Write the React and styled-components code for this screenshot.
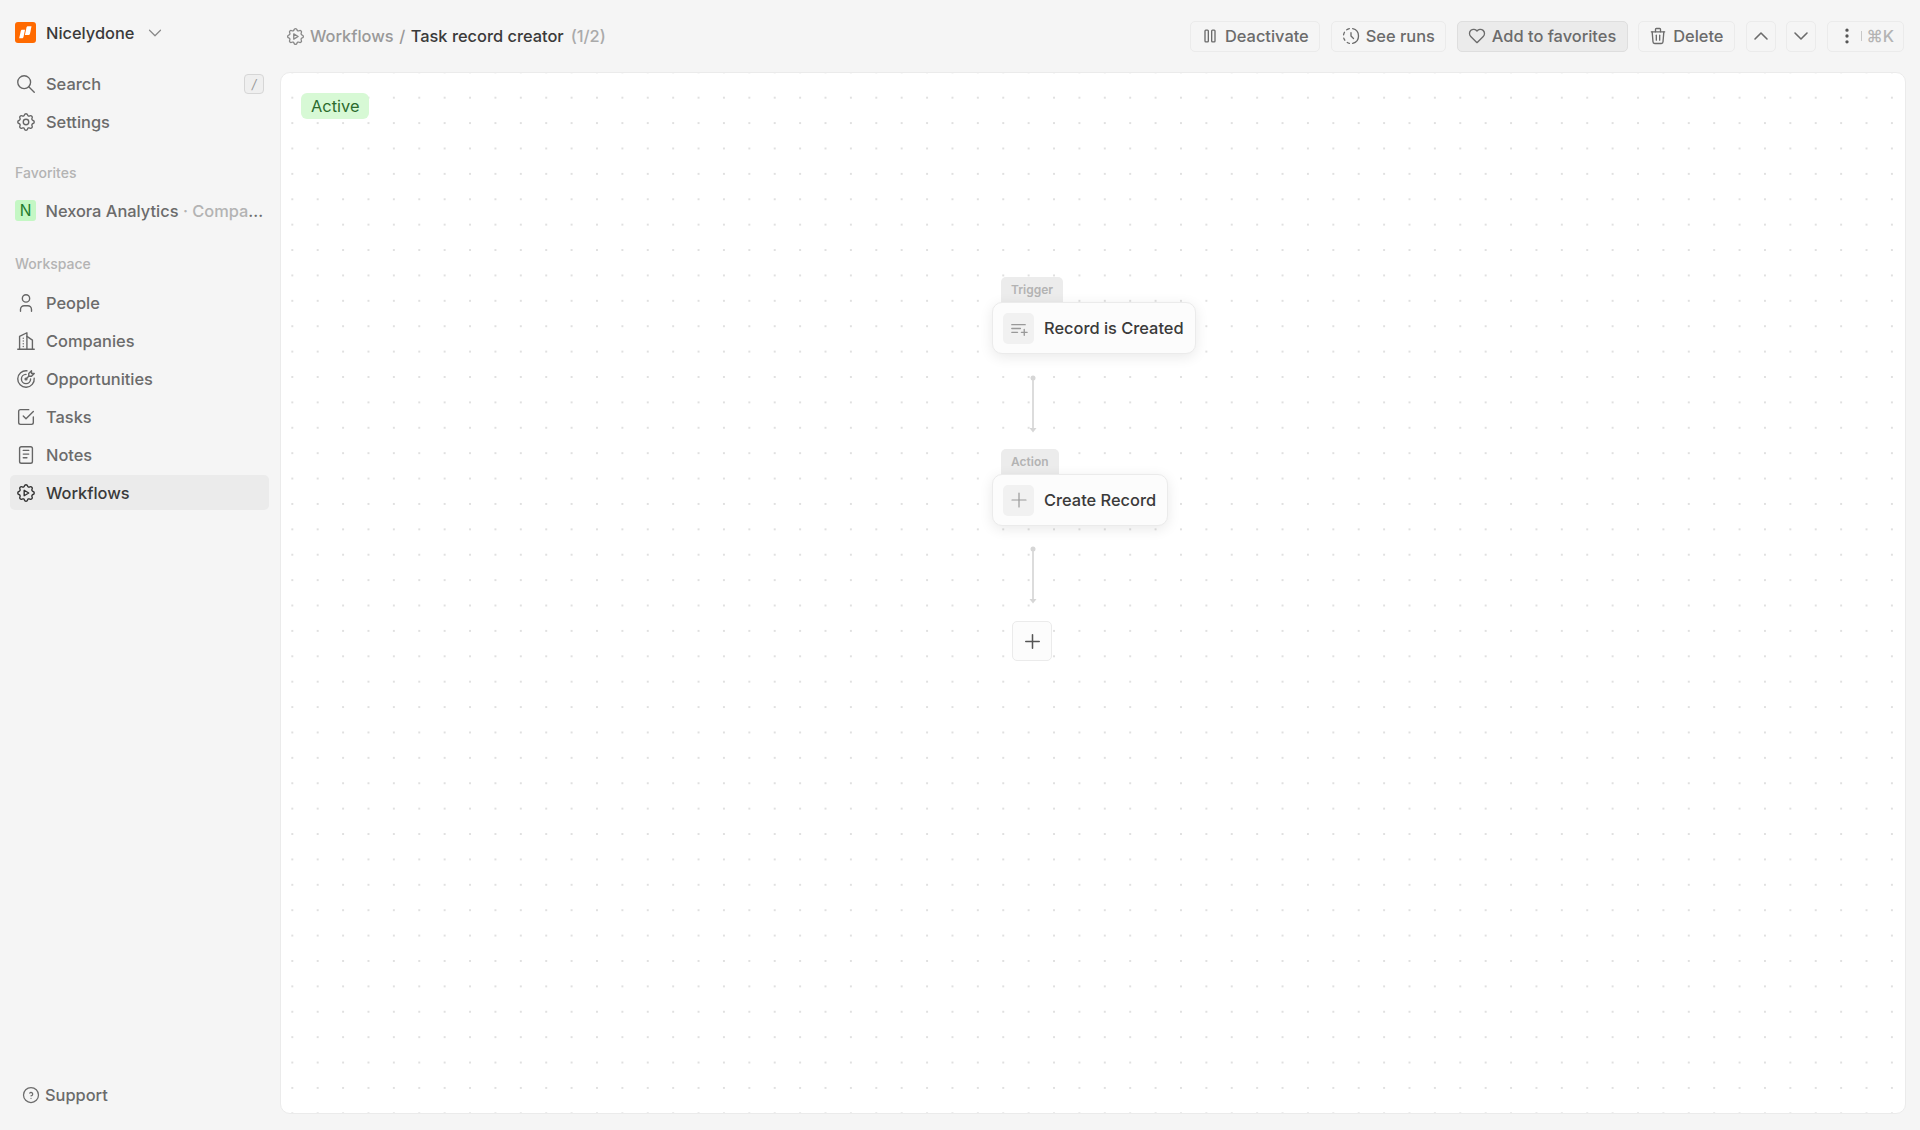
import React from "react";
import styled, { createGlobalStyle } from "styled-components";
import {
  TbSearch, TbSettings, TbUser, TbBuildingSkyscraper, TbTargetArrow, TbCheckbox, TbNotes,
  TbSettingsAutomation, TbPlayerPause, TbHistoryToggle, TbHeart, TbTrash, TbChevronUp,
  TbChevronDown, TbDotsVertical, TbHelpCircle, TbPlaylistAdd, TbPlus,
} from "react-icons/tb";

const Global = createGlobalStyle`
  html, body { margin: 0; padding: 0; height: 100%; }
  body { background: #f5f5f5; font-family: Inter, "Liberation Sans", sans-serif; color: #333; overflow: hidden; }
  * { box-sizing: border-box; }
`;

const Shell = styled.div`display: flex; width: 1920px; height: 1130px;`;

const Sidebar = styled.aside`
  width: 280px; flex: none; display: flex; flex-direction: column; padding: 15px 11px 18px 10px;
`;
const Brand = styled.div`
  display: flex; align-items: center; height: 35px; padding-left: 5px; gap: 10px;
  font-size: 16.4px; font-weight: 500; color: #3a3a3a;
`;
const Logo = styled.svg`width: 21px; height: 21px; flex: none;`;
const BrandChevron = styled(TbChevronDown)`color: #888; margin-left: -1px;`;
const NavGroup = styled.nav`display: flex; flex-direction: column; gap: 3px; margin-top: ${p => p.$mt}px;`;
const Row = styled.div`
  display: flex; align-items: center; height: 35px; padding: 0 5px 0 4.5px; gap: 9.5px; border-radius: 5px;
  font-size: 16.4px; font-weight: 500; white-space: nowrap;
  color: ${p => (p.$active ? "#3a3a3a" : "#6b6b6b")};
  background: ${p => (p.$active ? "#ebebeb" : "transparent")};
  svg { flex: none; color: ${p => (p.$active ? "#333" : "#666")}; }
`;
const Label = styled.div`
  font-size: 14px; font-weight: 500; color: #b3b3b3; padding-left: 5px; height: 16px; line-height: 16px;
  margin-top: ${p => p.$mt}px; margin-bottom: ${p => p.$mb}px;
`;
const Spacer = styled.div`flex: 1;`;
const Key = styled.span`
  margin-left: auto; width: 20px; height: 20px; border: 1px solid #d6d6d6; border-radius: 4px; background: #efefef;
  display: flex; align-items: center; justify-content: center; font-size: 13px; font-style: italic; color: #999; font-weight: 400;
`;
const Avatar = styled.span`
  width: 21px; height: 21px; margin-left: 0.5px; border-radius: 3px; background: #c4f7c4; color: #1f7a2e; flex: none;
  display: flex; align-items: center; justify-content: center; font-size: 15.5px; font-weight: 400;
`;
const Clip = styled.span`overflow: hidden; text-overflow: ellipsis; min-width: 0; flex: 1;`;
const Faint = styled.span`color: #b3b3b3;`;
const SupportRow = styled.div`
  display: flex; align-items: center; height: 35px; padding-left: 10.5px; gap: 4.5px; font-size: 16.4px; font-weight: 500; color: #6b6b6b;
`;

const Main = styled.main`flex: 1; min-width: 0; display: flex; flex-direction: column; padding: 0 14px 16px 0;`;
const Header = styled.header`display: flex; align-items: center; height: 72px; flex: none; padding: 0 2px 0 4.5px;`;
const Crumbs = styled.div`display: flex; align-items: center; font-size: 16.4px; font-weight: 500; white-space: nowrap; flex: 1;`;
const CrumbIcon = styled(TbSettingsAutomation)`color: #888; margin-right: 4.5px;`;
const CrumbParent = styled.span`color: #999;`;
const Slash = styled.span`color: #999; margin: 0 5.5px;`;
const CrumbTitle = styled.span`color: #3a3a3a;`;
const Count = styled.span`color: #aaa; margin-left: 7px;`;
const Actions = styled.div`display: flex; align-items: center; gap: 10.5px;`;
const Btn = styled.button`
  display: flex; align-items: center; justify-content: center; height: 31px; gap: 5px; padding: ${p => (p.$square ? "0" : "0 10.5px 0 9px")};
  width: ${p => (p.$square ? "30px" : "auto")};
  border: 1px solid ${p => (p.$on ? "#dedede" : "#ebebeb")}; border-radius: 5px;
  background: ${p => (p.$on ? "#ebebeb" : "transparent")};
  font: 500 16.4px Inter, "Liberation Sans", sans-serif; color: #6b6b6b;
`;
const MoreBtn = styled(Btn)`padding: 0 9px; gap: 0; color: #b3b3b3;`;
const Bar = styled.span`width: 1px; height: 10px; background: #c8c8c8; flex: none; margin: 0 5px 0 4px;`;

const Canvas = styled.section`
  position: relative; flex: 1; border: 1px solid #ebebeb; border-radius: 10px; overflow: hidden;
  background-color: #fff;
  background-image: radial-gradient(circle, #e0e0e0 1px, transparent 1.3px);
  background-size: 25.4px 25.4px;
  background-position: -1.4px -13.4px;
`;
const Status = styled.span`
  position: absolute; left: 20px; top: 20px; height: 25.5px; padding: 0 10px; border-radius: 6px; background: #d7f9d5; color: #2c6b2e;
  display: flex; align-items: center; font-size: 16.4px; font-weight: 400;
`;
const Node = styled.div`position: absolute; left: ${p => p.$x}px; top: ${p => p.$y}px;`;
const Tab = styled.div`
  position: absolute; left: 9px; top: -25px; height: 27px; padding: 5px 10px 0; border-radius: 5px 5px 0 0; background: #ececec;
  display: flex; align-items: flex-start; font-size: 12px; font-weight: 600; color: #b3b3b3;
`;
const Card = styled.div`
  position: relative; display: flex; align-items: center; height: 52px; gap: 10px; padding: 0 11px 0 10px; border-radius: 10px;
  background: #fcfcfc; border: 1px solid #ebebeb; box-shadow: 0 3px 14px rgba(0, 0, 0, 0.09);
  font-size: 16.4px; font-weight: 500; color: #3a3a3a; white-space: nowrap;
`;
const CardIcon = styled.span`
  width: 31px; height: 31px; border-radius: 5px; background: #f1f1f1; color: #999; display: flex; align-items: center; justify-content: center;
`;
const Edge = styled.svg`position: absolute; left: ${p => p.$x}px; top: ${p => p.$y}px;`;
const AddNode = styled.button`
  position: absolute; left: 731px; top: 548px; width: 40px; height: 40px; border: 1px solid #ebebeb; border-radius: 5px; background: #fcfcfc; color: #555;
  display: flex; align-items: center; justify-content: center; padding: 0;
`;

const Arrow = ({ x, y }) => (
  <Edge $x={x} $y={y} width="12" height="60" viewBox="0 0 12 60">
    <circle cx="6" cy="3" r="2.5" fill="#d6d6d6" />
    <line x1="6" y1="3" x2="6" y2="54" stroke="#d6d6d6" strokeWidth="1.7" />
    <path d="M2.5 53h7L6 57.5z" fill="#d6d6d6" />
  </Edge>
);

const icon = { size: 22, strokeWidth: 1.5 };
const bar = { size: 20, strokeWidth: 1.6 };
const nav = [
  [TbUser, "People"],
  [TbBuildingSkyscraper, "Companies"],
  [TbTargetArrow, "Opportunities"],
  [TbCheckbox, "Tasks"],
  [TbNotes, "Notes"],
];

export default function App() {
  return (
    <Shell>
      <Global />
      <Sidebar>
        <Brand>
          <Logo viewBox="0 0 21 21">
            <rect width="21" height="21" rx="3" fill="#ff6a00" />
            <path d="M5.8 9c.2-.8.8-1.3 1.6-1.3h2.6L8.500 15c-.2.8-.8 1.3-1.600 1.300H4.200z" fill="#fff" />
            <path d="M11.500 5.600c.2-.8.8-1.300 1.600-1.300h3.400L15 11.700c-.2.8-.9 1.300-1.700 1.300H9.900z" fill="#fff" />
          </Logo>
          Nicelydone
          <BrandChevron size={22} strokeWidth={1.3} />
        </Brand>
        <NavGroup $mt={16}>
          <Row><TbSearch {...icon} />Search<Key>/</Key></Row>
          <Row><TbSettings {...icon} />Settings</Row>
        </NavGroup>
        <Label $mt={26} $mb={12}>Favorites</Label>
        <Row><Avatar>N</Avatar><Clip>Nexora Analytics <Faint>· Company</Faint></Clip></Row>
        <Label $mt={28} $mb={13}>Workspace</Label>
        <NavGroup $mt={0}>
          {nav.map(([I, t]) => <Row key={t}><I {...icon} />{t}</Row>)}
          <Row $active><TbSettingsAutomation {...icon} />Workflows</Row>
        </NavGroup>
        <Spacer />
        <SupportRow><TbHelpCircle size={20} strokeWidth={1.5} />Support</SupportRow>
      </Sidebar>
      <Main>
        <Header>
          <Crumbs>
            <CrumbIcon size={21} strokeWidth={1.5} />
            <CrumbParent>Workflows</CrumbParent><Slash>/</Slash>
            <CrumbTitle>Task record creator</CrumbTitle><Count>(1/2)</Count>
          </Crumbs>
          <Actions>
            <Btn><TbPlayerPause {...bar} />Deactivate</Btn>
            <Btn><TbHistoryToggle {...bar} />See runs</Btn>
            <Btn $on><TbHeart {...bar} />Add to favorites</Btn>
            <Btn><TbTrash {...bar} />Delete</Btn>
            <Btn $square><TbChevronUp size={24} strokeWidth={1.6} /></Btn>
            <Btn $square><TbChevronDown size={24} strokeWidth={1.6} /></Btn>
            <MoreBtn><TbDotsVertical size={20} strokeWidth={2} color="#555" /><Bar />⌘K</MoreBtn>
          </Actions>
        </Header>
        <Canvas>
          <Status>Active</Status>
          <Node $x={711} $y={229}>
            <Tab>Trigger</Tab>
            <Card><CardIcon><TbPlaylistAdd size={23} strokeWidth={1.4} /></CardIcon>Record is Created</Card>
          </Node>
          <Arrow x={746} y={302} />
          <Node $x={711} $y={401}>
            <Tab>Action</Tab>
            <Card><CardIcon><TbPlus size={24} strokeWidth={1.2} /></CardIcon>Create Record</Card>
          </Node>
          <Arrow x={746} y={473} />
          <AddNode><TbPlus size={23} strokeWidth={1.6} /></AddNode>
        </Canvas>
      </Main>
    </Shell>
  );
}
